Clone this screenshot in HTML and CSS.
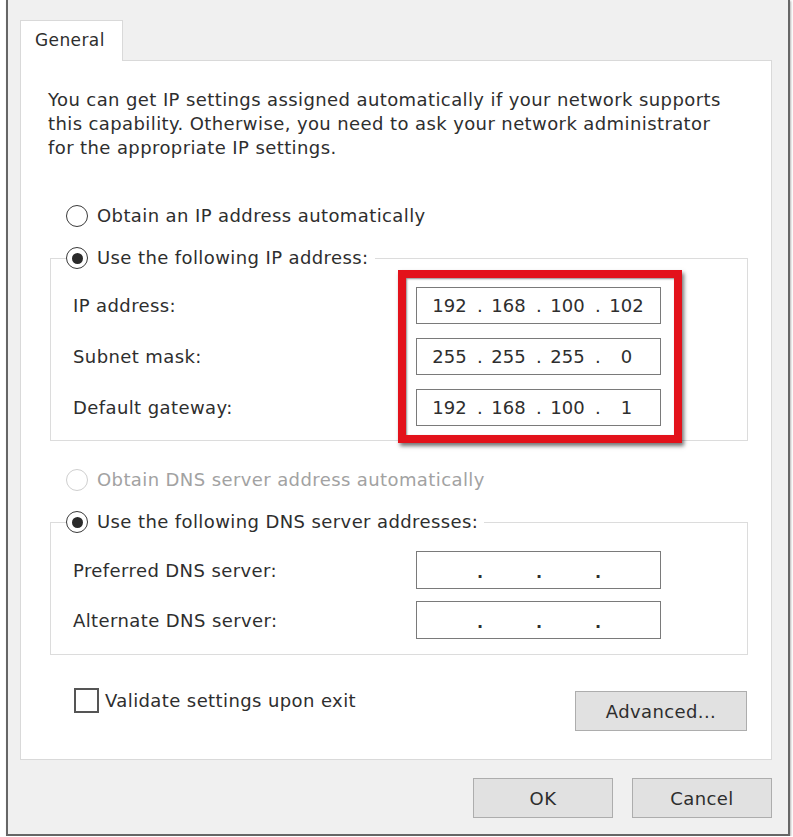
FILE: index.html
```html
<!DOCTYPE html>
<html lang="en">
<head>
    <meta charset="UTF-8">
    <title>Internet Protocol Version 4 (TCP/IPv4) Properties</title>
    <link rel="stylesheet" href="styles.css">
</head>
<body>
    <div class="window">
        <div class="tabbar">
            <div class="tab">General</div>
        </div>

        <div class="panel">
            <p class="intro">
                You can get IP settings assigned automatically if your network supports<br>
                this capability. Otherwise, you need to ask your network administrator<br>
                for the appropriate IP settings.
            </p>

            <div class="option first">
                <span class="radio"></span>
                <span>Obtain an IP address automatically</span>
            </div>

            <fieldset class="group">
                <legend class="option">
                    <span class="radio checked"></span>
                    <span>Use the following IP address:</span>
                </legend>
                <div class="fields ip-fields">
                    <div class="label">IP address:</div>
                    <div class="ipbox">
                        <span>192</span><i>.</i><span>168</span><i>.</i><span>100</span><i>.</i><span>102</span>
                    </div>
                    <div class="label">Subnet mask:</div>
                    <div class="ipbox">
                        <span>255</span><i>.</i><span>255</span><i>.</i><span>255</span><i>.</i><span>0</span>
                    </div>
                    <div class="label">Default gateway:</div>
                    <div class="ipbox">
                        <span>192</span><i>.</i><span>168</span><i>.</i><span>100</span><i>.</i><span>1</span>
                    </div>
                    <div class="highlight"></div>
                </div>
            </fieldset>

            <div class="option disabled">
                <span class="radio"></span>
                <span>Obtain DNS server address automatically</span>
            </div>

            <fieldset class="group">
                <legend class="option">
                    <span class="radio checked"></span>
                    <span>Use the following DNS server addresses:</span>
                </legend>
                <div class="fields dns-fields">
                    <div class="label">Preferred DNS server:</div>
                    <div class="ipbox empty">
                        <span></span><i>.</i><span></span><i>.</i><span></span><i>.</i><span></span>
                    </div>
                    <div class="label">Alternate DNS server:</div>
                    <div class="ipbox empty">
                        <span></span><i>.</i><span></span><i>.</i><span></span><i>.</i><span></span>
                    </div>
                </div>
            </fieldset>

            <div class="panel-bottom">
                <label class="check">
                    <span class="box"></span>
                    <span>Validate settings upon exit</span>
                </label>
                <button class="btn advanced">Advanced...</button>
            </div>
        </div>

        <div class="actions">
            <button class="btn">OK</button>
            <button class="btn">Cancel</button>
        </div>
    </div>
</body>
</html>
```

FILE: styles.css
```css
* {
    box-sizing: border-box;
    margin: 0;
    padding: 0;
}

body {
    background: #fff;
    font-family: "DejaVu Sans", sans-serif;
    font-size: 18px;
    letter-spacing: 0.4px;
    color: #2e2e2e;
}

.window {
    margin-left: 6px;
    width: 784px;
    height: 836px;
    background: #f0f0f0;
    border: 2px solid #666;
    border-top: 0;
    box-shadow: 1px 1px 2px rgba(0, 0, 0, 0.3);
}

.tabbar {
    padding: 20px 0 0 12px;
}

.tab {
    width: 103px;
    height: 41px;
    margin-bottom: -1px;
    position: relative;
    padding: 8px 0 0 14px;
    background: #fff;
    border: 1px solid #d9d9d9;
    border-bottom: 0;
    font-size: 17px;
    line-height: 22px;
}

.panel {
    margin: 0 16px 0 12px;
    height: 700px;
    background: #fff;
    border: 1px solid #d9d9d9;
}

.intro {
    margin: 27px 0 0 27px;
    line-height: 24px;
}

.option {
    display: flex;
    align-items: center;
    height: 24px;
    line-height: 24px;
}

.option.first {
    margin: 44px 0 0 45px;
}

.option.disabled {
    margin: 27px 0 0 45px;
    color: #a2a2a2;
}

.radio {
    width: 22px;
    height: 22px;
    margin-right: 9px;
    border: 1.5px solid #3a3a3a;
    border-radius: 50%;
    display: flex;
    align-items: center;
    justify-content: center;
    background: #fff;
}

.radio.checked::after {
    content: "";
    width: 11px;
    height: 11px;
    border-radius: 50%;
    background: #2a2a2a;
}

.disabled .radio {
    border-color: #cfcfcf;
}

.group {
    margin: 18px 0 0 29px;
    width: 698px;
    border: 1px solid #dcdcdc;
}

.group legend {
    margin-left: 15px;
    padding-right: 6px;
    background: #fff;
}

.fields {
    position: relative;
    display: grid;
    grid-template-columns: 343px 245px;
    align-items: center;
    padding-left: 22px;
}

.ip-fields {
    padding-top: 17px;
    padding-bottom: 14px;
    row-gap: 14px;
    grid-auto-rows: 37px;
}

.dns-fields {
    padding-top: 17px;
    padding-bottom: 15px;
    row-gap: 12px;
    grid-auto-rows: 38px;
}

.ipbox {
    height: 100%;
    border: 1.5px solid #7a7a7a;
    display: flex;
    align-items: center;
    padding-left: 5px;
    letter-spacing: 0;
}

.ipbox span {
    width: 55px;
    text-align: center;
}

.ipbox i {
    font-style: normal;
    width: 4px;
    text-align: center;
}

.ipbox.empty {
    align-items: flex-end;
    padding-bottom: 6px;
    font-size: 16px;
    font-weight: bold;
}

.highlight {
    position: absolute;
    left: 347px;
    top: 0;
    width: 284px;
    height: 173px;
    border: 8px solid #e3121b;
    box-shadow: 2px 3px 4px rgba(0, 0, 0, 0.55), inset 1px 1px 2px rgba(0, 0, 0, 0.45);
    pointer-events: none;
}

.panel-bottom {
    display: flex;
    justify-content: space-between;
    align-items: flex-start;
    margin: 33px 24px 0 53px;
}

.check {
    display: flex;
    align-items: center;
    height: 25px;
}

.check .box {
    width: 25px;
    height: 25px;
    margin-right: 6px;
    border: 2px solid #555;
    background: #fff;
}

.btn {
    font-family: inherit;
    font-size: 18px;
    letter-spacing: 0.4px;
    color: #2e2e2e;
    background: #e1e1e1;
    border: 1.5px solid #adadad;
    width: 140px;
    height: 40px;
}

.btn.advanced {
    width: 172px;
    margin-top: 3px;
}

.actions {
    display: flex;
    justify-content: flex-end;
    gap: 19px;
    padding: 18px 16px 0 0;
}
```
